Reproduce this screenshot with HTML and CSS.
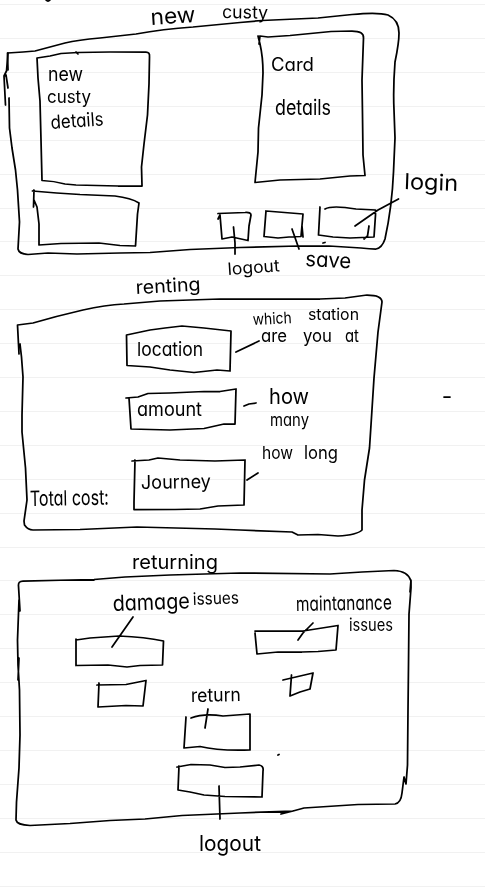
FILE: index.html
```
<!DOCTYPE html>
<html lang="en">
<head>
<meta charset="utf-8">
<title>Rental wireframes</title>
<link rel="stylesheet" href="styles.css">
</head>
<body>
<main class="notebook">
<section class="sheet">
<svg class="sketch" viewBox="0 0 485 272">
<path class="rule" d="M0 4.5H485M0 38.5H485M0 72.5H485M0 106.5H485M0 140.5H485M0 174.5H485M0 208.5H485M0 241.5H485"/>
<g class="ink">
<path d="M46 0Q48 2 50 0" />
<path d="M8 70L7.500 53L23 52L35 51Q50 47 65 43Q78 40 100 38L136 34Q163 29 193 27L240 22.500L262 20.500L318 18L352 14.500Q378 12 388 15Q399 20 399 33Q399 43 395 62Q393 88 394 110L395 138L393.500 172Q392 207 385 239Q382 248 376 249Q370 249 361 248L329 246L298 246L240 247.500L190 249.500L150 252.500L120 253L77 254L48 253L28 254.500Q19 254 18 249L19.500 222L17.500 190L15.500 170L12 148L9.500 128L9 98"/>
<path d="M8 53L6.500 71L4 76L5.500 105M4.500 76L6 75L8 88"/>
<path d="M37 58L50 56L61 53.500L78 52.500L110 52L146 52Q150 52 149.500 57L149 84L147.500 115L144 144L141.500 167L142 185.500L142 186L118 186L76 185L65 184Q54 181 42 180.500L41 140L40 101L38 78Z"/>
<path d="M76 52L78 54"/>
<path d="M32.500 191Q57 193 80 194.500L115 196Q131 198 139 203L137.500 214L135.500 246L120 245.500L99 243L61 243.500L39 245L39 224L37 207L34 200L33.500 207L34 190"/>
<path d="M259 44L260 36L268 37L290 35.500L331 31.500L352 31Q364 31 363.500 38L362 80L362.500 115L363 155L365 175.500L350 176L320 179L280 180L255 182.500L258 152L258.500 128L262 95L263 73Q263 57 260 44L258 36"/>
<path d="M218 219L220 215L222 239L232 237L248 240.500L249 226L251 215Q251 212 245 212.500L218 213.500M233.500 227L235 243L235 254"/>
<path d="M266 211L303 214L301 236.500L289 237L278 238L264 236.500L266 211M302 226L303 237M292 229L299 249"/>
<path d="M320 207L318.500 235L333 237L350 238L374 237L375.500 215L375.500 210L356 209Q332 205 325 209M369 226L367.500 236L364 239M398.500 199L378 210L355 226M323 243L325 242.500"/>
</g>
<g class="words">
<text x="151" y="25" font-size="22" textLength="45" lengthAdjust="spacingAndGlyphs" transform="rotate(-4 151 25)">new</text>
<text x="222" y="18" font-size="18" textLength="46" lengthAdjust="spacingAndGlyphs" transform="rotate(1 222 18)">custy</text>
<text x="48" y="81" font-size="19" textLength="35" lengthAdjust="spacingAndGlyphs">new</text>
<text x="47" y="103" font-size="18" textLength="44" lengthAdjust="spacingAndGlyphs">custy</text>
<text x="51" y="129" font-size="19" textLength="53" lengthAdjust="spacingAndGlyphs" transform="rotate(-4 51 129)">details</text>
<text x="271" y="71" font-size="18" textLength="43" lengthAdjust="spacingAndGlyphs">Card</text>
<text x="275" y="115" font-size="21" textLength="56" lengthAdjust="spacingAndGlyphs">details</text>
<text x="404" y="189" font-size="22" textLength="54" lengthAdjust="spacingAndGlyphs" transform="rotate(2 404 189)">login</text>
<text x="228" y="275" font-size="17" textLength="52" lengthAdjust="spacingAndGlyphs" transform="rotate(-4 228 275)">logout</text>
<text x="305" y="266" font-size="21" textLength="46" lengthAdjust="spacingAndGlyphs" transform="rotate(3 305 266)">save</text>
</g>
</svg>
</section>
<section class="sheet">
<svg class="sketch" viewBox="0 272 485 275">
<path class="rule" d="M0 275.5H485M0 309.5H485M0 343.5H485M0 377.5H485M0 411.5H485M0 445.5H485M0 479.5H485M0 513.5H485"/>
<g class="ink">
<path d="M19 354L17.500 325L33 323Q57 316 83 310Q105 305 124 304L160 301L220 299L245 299L320 299L345 298L367 295Q382 295 382 302L378 332L374 378L371 425L369.500 448L364.500 480L362 510L362 530Q357 535 338 536L318 534.500L298 535L292 532L240 530L215 529L137 527L80 529.500L33 530Q28 530 24.500 525L24 521L27 500L25.500 468L22 432L22 415L23 377L21.500 357L20 344"/>
<path d="M126.500 335L150 330L165 328L182 326L204 328L231 331L230 371L217 370L194 372.500L170 370L150 367L127 365.500Z"/>
<path d="M126 398L138 397L148 393.500L170 393L204 391.500L220 391.500L236 389L235 424L224 424L204 428.500L170 430L131 429L129 398"/>
<path d="M132 461L149 460L158 458L180 460L215 461L245 460L244 505L218 506L200 509L175 509.500L134 509.500L134 502L135 460"/>
<path d="M236 352L259 341M244 406L249 404L256 403M247 480L258 473M444 397L450 397"/>
</g>
<g class="words">
<text x="136" y="294" font-size="19" textLength="65" lengthAdjust="spacingAndGlyphs" transform="rotate(-3 136 294)">renting</text>
<text x="253" y="325" font-size="16" textLength="39" lengthAdjust="spacingAndGlyphs" transform="rotate(-3 253 325)">which</text>
<text x="308" y="320" font-size="16" textLength="51" lengthAdjust="spacingAndGlyphs">station</text>
<text x="261" y="342" font-size="18" textLength="26" lengthAdjust="spacingAndGlyphs">are</text>
<text x="303" y="342" font-size="18" textLength="29" lengthAdjust="spacingAndGlyphs">you</text>
<text x="345" y="342" font-size="18" textLength="14" lengthAdjust="spacingAndGlyphs">at</text>
<text x="137" y="356" font-size="19" textLength="66" lengthAdjust="spacingAndGlyphs">location</text>
<text x="137" y="416" font-size="19" textLength="65" lengthAdjust="spacingAndGlyphs">amount</text>
<text x="269" y="404" font-size="22" textLength="40" lengthAdjust="spacingAndGlyphs">how</text>
<text x="270" y="426" font-size="17" textLength="39" lengthAdjust="spacingAndGlyphs">many</text>
<text x="262" y="459" font-size="17" textLength="31" lengthAdjust="spacingAndGlyphs">how</text>
<text x="304" y="459" font-size="18" textLength="34" lengthAdjust="spacingAndGlyphs">long</text>
<text x="141" y="489" font-size="19" textLength="70" lengthAdjust="spacingAndGlyphs" transform="rotate(-1 141 489)">Journey</text>
<text x="30" y="506" font-size="21" textLength="79" lengthAdjust="spacingAndGlyphs" transform="rotate(-1 30 506)">Total cost:</text>
</g>
</svg>
</section>
<section class="sheet">
<svg class="sketch" viewBox="0 547 485 348">
<path class="rule" d="M0 547.5H485M0 580.5H485M0 614.5H485M0 648.5H485M0 682.5H485M0 716.5H485M0 750.5H485M0 784.5H485M0 818.5H485M0 852.5H485M0 886.5H485"/>
<g class="ink">
<path d="M20 611L18.500 586Q18 581 23 581L70 580L94 579.500L125 577L170 575L240 573L330 574L362 572L394 570.500Q408 571 411 581L411 588L409 614L408.500 665L408 710L407.500 765L406 784L404 777L402 793Q401 803 395 804L358 804.500L304 808L293 811L281 814M293 811L240 813L182 815.500L145 819L110 820.500L70 823.500L30 825.500Q17 825 16 820L16.500 802L19 768L20 735L19.500 690L18 665L17.500 640L19 600M411 580L410 592M19 658L18 680M70 580L94 580"/>
<path d="M76 640L90 638L119 636Q145 637 163.500 641L162.500 665L140 665.500L127 667L108 665L76 665.500L76 639M133 617L112 647"/>
<path d="M97 685L126 684.500L146 680.500L143 706L126 705.500L98 707L99 683"/>
<path d="M255 631L303 631L338 625.500L336 650L318 651.500L302 652L278 652L257 654L255 633M313 623L303 633L298 640"/>
<path d="M283 680L313 673L310 689L300 692L290 696L291.500 675"/>
<path d="M186 717L184 748L200 746.500Q218 751 250 750L250 714L223 716Q204 713 191 718M208 709L205 728"/>
<path d="M177 767L191 764.500L210 765L225 767.500L240 767L259 765Q264 766 263 771L262 797L225 796.500L204 795L190 792L178 790L179 766M219 786L220 819M278 755L279 754.500"/>
</g>
<g class="words">
<text x="132" y="569" font-size="20" textLength="86" lengthAdjust="spacingAndGlyphs">returning</text>
<text x="113" y="611" font-size="22" textLength="77" lengthAdjust="spacingAndGlyphs" transform="rotate(-2 113 611)">damage</text>
<text x="193" y="605" font-size="17" textLength="46" lengthAdjust="spacingAndGlyphs" transform="rotate(-2 193 605)">issues</text>
<text x="296" y="611" font-size="20" textLength="96" lengthAdjust="spacingAndGlyphs" transform="rotate(-1 296 611)">maintanance</text>
<text x="349" y="631" font-size="17" textLength="44" lengthAdjust="spacingAndGlyphs">issues</text>
<text x="191" y="702" font-size="19" textLength="50" lengthAdjust="spacingAndGlyphs" transform="rotate(-1 191 702)">return</text>
<text x="199" y="851" font-size="22" textLength="62" lengthAdjust="spacingAndGlyphs">logout</text>
</g>
</svg>
</section>
</main>
</body>
</html>
```
FILE: styles.css
```
body {
  margin: 0;
  background: #fff;
}

.notebook {
  display: flex;
  flex-direction: column;
  width: 485px;
  height: 895px;
  overflow: hidden;
}

.sheet {
  flex: none;
}

.sketch {
  display: block;
  width: 485px;
  overflow: visible;
}

/* multiply keeps the rules from washing out descenders of the sheet above */
.rule {
  stroke: #f1f1f1;
  stroke-width: 1;
  fill: none;
  mix-blend-mode: multiply;
}

.ink {
  fill: none;
  stroke: #000;
  stroke-width: 1.75;
  stroke-linecap: round;
  stroke-linejoin: round;
}

.words {
  font-family: Inter, "Open Sans", sans-serif;
  font-feature-settings: "cv11" 1;
  fill: #000;
}
```
